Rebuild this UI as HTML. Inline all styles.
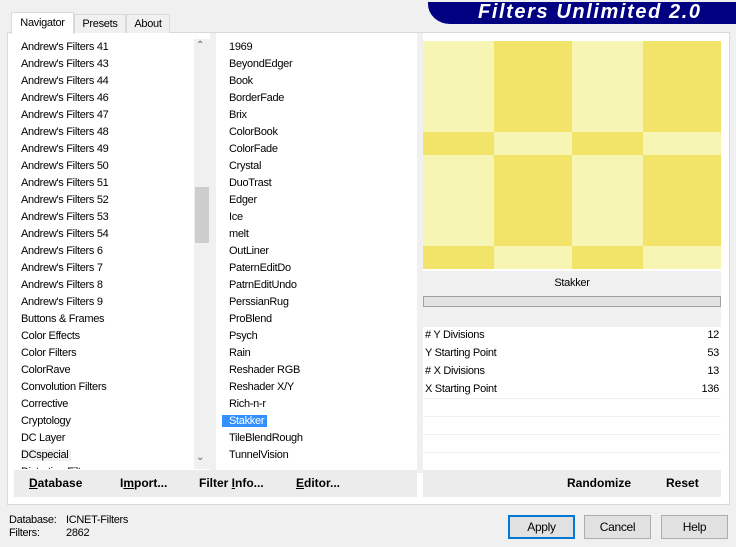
<!DOCTYPE html>
<html><head><style>
*{margin:0;padding:0;box-sizing:border-box}
body{width:736px;height:547px;background:#f0f0f0;font-family:"Liberation Sans",Arial,sans-serif;font-size:11px;letter-spacing:-0.3px;color:#000;position:relative;overflow:hidden}
.a{position:absolute}
.list div{height:17px;line-height:17px;padding-left:7px;white-space:nowrap}
.btn{position:absolute;background:#e1e1e1;border:1px solid #adadad;text-align:center;line-height:22px;font-size:12px}
.prow{position:absolute;left:423px;width:298px;height:17px;background:#fff;line-height:17px;padding:0 2px}
.prow span{float:right}
.b{font-weight:bold;font-size:12px;letter-spacing:0}
</style></head><body>
<div class="a" style="left:428px;top:2px;width:308px;height:22px;background:#000080;border-bottom-left-radius:22px 20px"></div>
<div class="a" style="left:478px;top:1px;height:22px;line-height:22px;color:#fff;font-weight:bold;font-style:italic;font-size:20px;letter-spacing:1.6px">Filters Unlimited 2.0</div>
<div class="a" style="left:7px;top:32px;width:723px;height:473px;background:#fff;border:1px solid #d9d9d9"></div>
<div class="a" style="left:11px;top:12px;width:63px;height:22px;background:#fff;border:1px solid #d9d9d9;border-bottom:none;text-align:center;line-height:20px">Navigator</div>
<div class="a" style="left:74px;top:14px;width:52px;height:19px;background:#f0f0f0;border:1px solid #d9d9d9;border-bottom:none;text-align:center;line-height:18px">Presets</div>
<div class="a" style="left:126px;top:14px;width:44px;height:19px;background:#f0f0f0;border:1px solid #d9d9d9;border-bottom:none;text-align:center;line-height:18px">About</div>
<div class="a list" style="left:14px;top:39px;width:180px;height:430px;overflow:hidden;background:#fff">
<div>Andrew's Filters 41</div><div>Andrew's Filters 43</div><div>Andrew's Filters 44</div><div>Andrew's Filters 46</div><div>Andrew's Filters 47</div><div>Andrew's Filters 48</div><div>Andrew's Filters 49</div><div>Andrew's Filters 50</div><div>Andrew's Filters 51</div><div>Andrew's Filters 52</div><div>Andrew's Filters 53</div><div>Andrew's Filters 54</div><div>Andrew's Filters 6</div><div>Andrew's Filters 7</div><div>Andrew's Filters 8</div><div>Andrew's Filters 9</div><div>Buttons &amp; Frames</div><div>Color Effects</div><div>Color Filters</div><div>ColorRave</div><div>Convolution Filters</div><div>Corrective</div><div>Cryptology</div><div>DC Layer</div><div><span style="background:#f0f0f0;padding:0 3px 0 0">DCspecial</span></div><div>Distortion Filters</div>
</div>
<div class="a" style="left:194px;top:39px;width:16px;height:430px;background:#f0f0f0"></div>
<div class="a" style="left:195px;top:187px;width:14px;height:56px;background:#cdcdcd"></div>
<div class="a" style="left:196px;top:40px;color:#606060;font-size:10px">&#8963;</div>
<div class="a" style="left:196px;top:452px;color:#606060;font-size:10px">&#8964;</div>
<div class="a list" style="left:222px;top:39px;width:190px;height:430px;overflow:hidden;background:#fff">
<div>1969</div><div>BeyondEdger</div><div>Book</div><div>BorderFade</div><div>Brix</div><div>ColorBook</div><div>ColorFade</div><div>Crystal</div><div>DuoTrast</div><div>Edger</div><div>Ice</div><div>melt</div><div>OutLiner</div><div>PaternEditDo</div><div>PatrnEditUndo</div><div>PerssianRug</div><div>ProBlend</div><div>Psych</div><div>Rain</div><div>Reshader RGB</div><div>Reshader X/Y</div><div>Rich-n-r</div><div><span style="background:#3390ff;color:#fff;padding:0 3px 0 7px;margin-left:-7px">Stakker</span></div><div>TileBlendRough</div><div>TunnelVision</div>
</div>
<div class="a" style="left:210px;top:33px;width:6px;height:440px;background:#f0f0f0"></div>
<div class="a" style="left:417px;top:33px;width:6px;height:440px;background:#f0f0f0"></div>
<svg class="a" style="left:423px;top:41px" width="298" height="228">
<defs><style>.l{fill:#f7f5b4}.d{fill:#f2e468}</style></defs>
<g>
<rect class="l" x="0" y="0" width="71" height="34"/><rect class="d" x="71" y="0" width="78" height="34"/><rect class="l" x="149" y="0" width="71" height="34"/><rect class="d" x="220" y="0" width="78" height="34"/>
<rect class="l" x="0" y="34" width="71" height="57"/><rect class="d" x="71" y="34" width="78" height="57"/><rect class="l" x="149" y="34" width="71" height="57"/><rect class="d" x="220" y="34" width="78" height="57"/>
<rect class="d" x="0" y="91" width="71" height="23"/><rect class="l" x="71" y="91" width="78" height="23"/><rect class="d" x="149" y="91" width="71" height="23"/><rect class="l" x="220" y="91" width="78" height="23"/>
<rect class="l" x="0" y="114" width="71" height="34"/><rect class="d" x="71" y="114" width="78" height="34"/><rect class="l" x="149" y="114" width="71" height="34"/><rect class="d" x="220" y="114" width="78" height="34"/>
<rect class="l" x="0" y="148" width="71" height="57"/><rect class="d" x="71" y="148" width="78" height="57"/><rect class="l" x="149" y="148" width="71" height="57"/><rect class="d" x="220" y="148" width="78" height="57"/>
<rect class="d" x="0" y="205" width="71" height="23"/><rect class="l" x="71" y="205" width="78" height="23"/><rect class="d" x="149" y="205" width="71" height="23"/><rect class="l" x="220" y="205" width="78" height="23"/>
</g></svg>
<div class="a" style="left:423px;top:271px;width:298px;height:56px;background:#f0f0f0"></div>
<div class="a" style="left:423px;top:277px;width:298px;text-align:center">Stakker</div>
<div class="a" style="left:423px;top:296px;width:298px;height:11px;background:#e3e3e3;border:1px solid #a0a0a0"></div>
<div class="prow" style="top:327px"># Y Divisions<span>12</span></div>
<div class="prow" style="top:345px">Y Starting Point<span>53</span></div>
<div class="prow" style="top:363px"># X Divisions<span>13</span></div>
<div class="prow" style="top:381px">X Starting Point<span>136</span></div>
<div class="a" style="left:423px;top:398px;width:298px;height:1px;background:#f0f0f0"></div>
<div class="a" style="left:423px;top:416px;width:298px;height:1px;background:#f0f0f0"></div>
<div class="a" style="left:423px;top:434px;width:298px;height:1px;background:#f0f0f0"></div>
<div class="a" style="left:423px;top:452px;width:298px;height:1px;background:#f0f0f0"></div>
<div class="a b" style="left:14px;top:470px;width:403px;height:27px;background:#ececec;line-height:27px">
<span class="a" style="left:15px"><u>D</u>atabase</span><span class="a" style="left:106px">I<u>m</u>port...</span><span class="a" style="left:185px">Filter <u>I</u>nfo...</span><span class="a" style="left:282px"><u>E</u>ditor...</span></div>
<div class="a b" style="left:423px;top:470px;width:298px;height:27px;background:#ececec;line-height:27px">
<span class="a" style="left:144px">Randomize</span><span class="a" style="left:243px">Reset</span></div>
<div class="a" style="left:9px;top:514px;line-height:13px">Database:<br>Filters:</div>
<div class="a" style="left:66px;top:514px;line-height:13px">ICNET-Filters<br>2862</div>
<div class="btn" style="left:508px;top:515px;width:67px;height:24px;border:2px solid #0078d7;line-height:20px">Apply</div>
<div class="btn" style="left:584px;top:515px;width:67px;height:24px">Cancel</div>
<div class="btn" style="left:661px;top:515px;width:67px;height:24px">Help</div>
</body></html>
